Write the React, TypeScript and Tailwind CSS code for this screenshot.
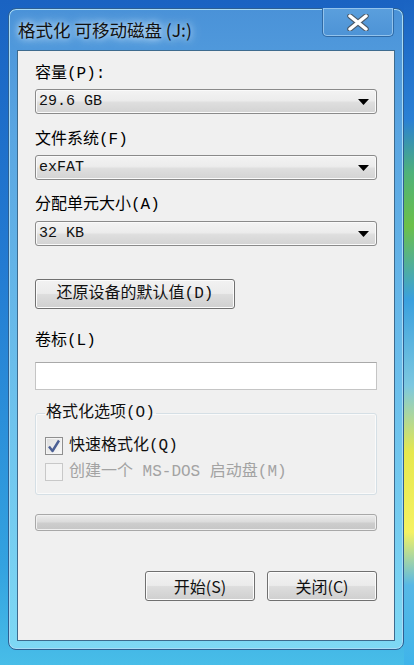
import React from "react";

const mono = "font-['Liberation_Mono','Noto_Sans_CJK_SC',monospace]";
const sans = "font-['Noto_Sans_CJK_SC','Liberation_Sans',sans-serif]";

function Arrow() {
  return (
    <svg width="11" height="6" viewBox="0 0 11 6">
      <path d="M0 0 H11 L5.5 6 Z" fill="#000" />
    </svg>
  );
}

function Select({ value }: { value: string }) {
  return (
    <div className="flex h-[25px] items-center justify-between rounded-[3px] border border-[#8a8a8a] bg-[linear-gradient(to_bottom,#f3f3f3_0%,#ececec_45%,#dedede_55%,#d3d3d3_100%)] pl-[3px] pr-[7px] shadow-[inset_0_0_0_1px_#fafafa]">
      <span className={`${mono} text-[15px] leading-none text-[#111]`}>{value}</span>
      <Arrow />
    </div>
  );
}

function WinButton({ children, className = "" }: { children: React.ReactNode; className?: string }) {
  return (
    <button
      className={`flex items-center justify-center rounded-[3px] border border-[#707070] bg-[linear-gradient(to_bottom,#f2f2f2_0%,#ebebeb_48%,#dddddd_52%,#cfcfcf_100%)] shadow-[inset_0_0_0_1px_#fcfcfc] text-[#111] ${className}`}
    >
      {children}
    </button>
  );
}

export default function App() {
  return (
    <div className="flex h-[665px] w-[414px] overflow-hidden bg-[linear-gradient(to_bottom,#1a63c2_0%,#237bd2_40%,#33a2e0_85%,#48bde8_100%)]">
      <div className="flex-1 pl-2 pt-2">
        {/* window frame */}
        <div className="flex h-[642px] w-[396px] flex-col rounded-[8px] border border-[#2e5f92] bg-[linear-gradient(to_bottom,#4a92d8_0%,#5aa6e2_20%,#6cc0ec_60%,#7ed8f4_100%)] shadow-[inset_0_0_0_1px_#a9dcf6]">
          {/* title bar */}
          <div className="flex h-[41px] items-start pl-[9px] pr-[9px]">
            <div className={`${sans} mt-[9px] text-[17.5px] leading-[24px] text-[#111] [text-shadow:0_0_12px_#d6ecfb,0_0_6px_#d6ecfb]`}>
              格式化 可移动磁盘 (J:)
            </div>
            <div className="flex-1" />
            <div className="-mt-px flex h-[29px] w-[72px] items-center justify-center rounded-b-[5px] border border-t-0 border-[#2f6aa6] bg-[linear-gradient(to_bottom,#5b9fdd,#4d93d6)] shadow-[inset_0_0_0_1px_#93c3ec]">
              <svg width="22" height="17" viewBox="0 0 22 17">
                <path d="M3 2 L19 15 M19 2 L3 15" stroke="#4a5a6a" strokeWidth="5.5" strokeLinecap="round" />
                <path d="M3 2 L19 15 M19 2 L3 15" stroke="#ffffff" strokeWidth="3.5" strokeLinecap="round" />
              </svg>
            </div>
          </div>

          {/* client area */}
          <div className="mx-[8px] mb-[8px] flex flex-1 flex-col border border-[#3e6b8e] bg-[#f0f0f0] px-[17px]">
            <div className={`${mono} mt-[13px] h-5 text-[16px] leading-5 text-black`}>容量(P):</div>
            <div className="mt-[5px]">
              <Select value="29.6 GB" />
            </div>

            <div className={`${mono} mt-[16px] h-5 text-[16px] leading-5 text-black`}>文件系统(F)</div>
            <div className="mt-[5px]">
              <Select value="exFAT" />
            </div>

            <div className={`${mono} mt-[15px] h-5 text-[16px] leading-5 text-black`}>分配单元大小(A)</div>
            <div className="mt-[6px]">
              <Select value="32 KB" />
            </div>

            <div className="mt-[33px] flex">
              <WinButton className={`${mono} h-[30px] w-[200px] text-[16px]`}>还原设备的默认值(D)</WinButton>
            </div>

            <div className={`${mono} mt-[22px] h-5 text-[16px] leading-5 text-black`}>卷标(L)</div>
            <div className="mt-[11px] h-[28px] border border-[#c5c5c5] border-t-[#a9a9a9] bg-white" />

            <fieldset className="mt-[13px] rounded-[3px] border border-[#d5dfe5] pb-[12px] pl-[9px] shadow-[inset_0_0_0_1px_#fafafa]">
              <legend className={`${mono} px-[1px] text-[16px] leading-5 text-[#111]`}>格式化选项(O)</legend>
              <div className="mt-[13px] flex items-center gap-[6px]">
                <div className="flex h-[18px] w-[18px] items-center justify-center border border-[#8f8f8f] bg-[linear-gradient(to_bottom_right,#dcdcdc,#fafafa)] shadow-[inset_0_0_0_1px_#f4f4f4]">
                  <svg width="14" height="14" viewBox="0 0 14 14">
                    <path d="M2 7.5 L5.5 12 L12 1.5" fill="none" stroke="#4b5f94" strokeWidth="2.4" strokeLinejoin="round" />
                  </svg>
                </div>
                <span className={`${mono} text-[16px] leading-5 text-[#111]`}>快速格式化(Q)</span>
              </div>
              <div className="mt-[6px] flex items-center gap-[6px]">
                <div className="h-[18px] w-[18px] border border-[#c8c8c8] bg-[#f4f4f4]" />
                <span className={`${mono} text-[16px] leading-5 text-[#a3a3a3]`}>创建一个 MS-DOS 启动盘(M)</span>
              </div>
            </fieldset>

            <div className="mt-[19px] h-[17px] rounded-[3px] border border-[#a8a8a8] bg-[linear-gradient(to_bottom,#ececec_0%,#dcdcdc_45%,#cdcdcd_55%,#c6c6c6_100%)] shadow-[inset_0_0_0_1px_#f0f0f0]" />

            <div className="mt-[40px] flex justify-end gap-[12px]">
              <WinButton className={`${sans} h-[30px] w-[110px] text-[16px]`}>开始(S)</WinButton>
              <WinButton className={`${sans} h-[30px] w-[110px] text-[16px]`}>关闭(C)</WinButton>
            </div>
          </div>
        </div>
      </div>
      <div className="w-[10px] bg-[linear-gradient(to_bottom,#1a63c2_0%,#2a80d4_18%,#4fb27a_26%,#6cc04a_34%,#3aa0de_45%,#7cc8e0_58%,#e6e84e_68%,#f5f263_80%,#57b8e6_88%,#3fb4ea_100%)]" />
    </div>
  );
}
